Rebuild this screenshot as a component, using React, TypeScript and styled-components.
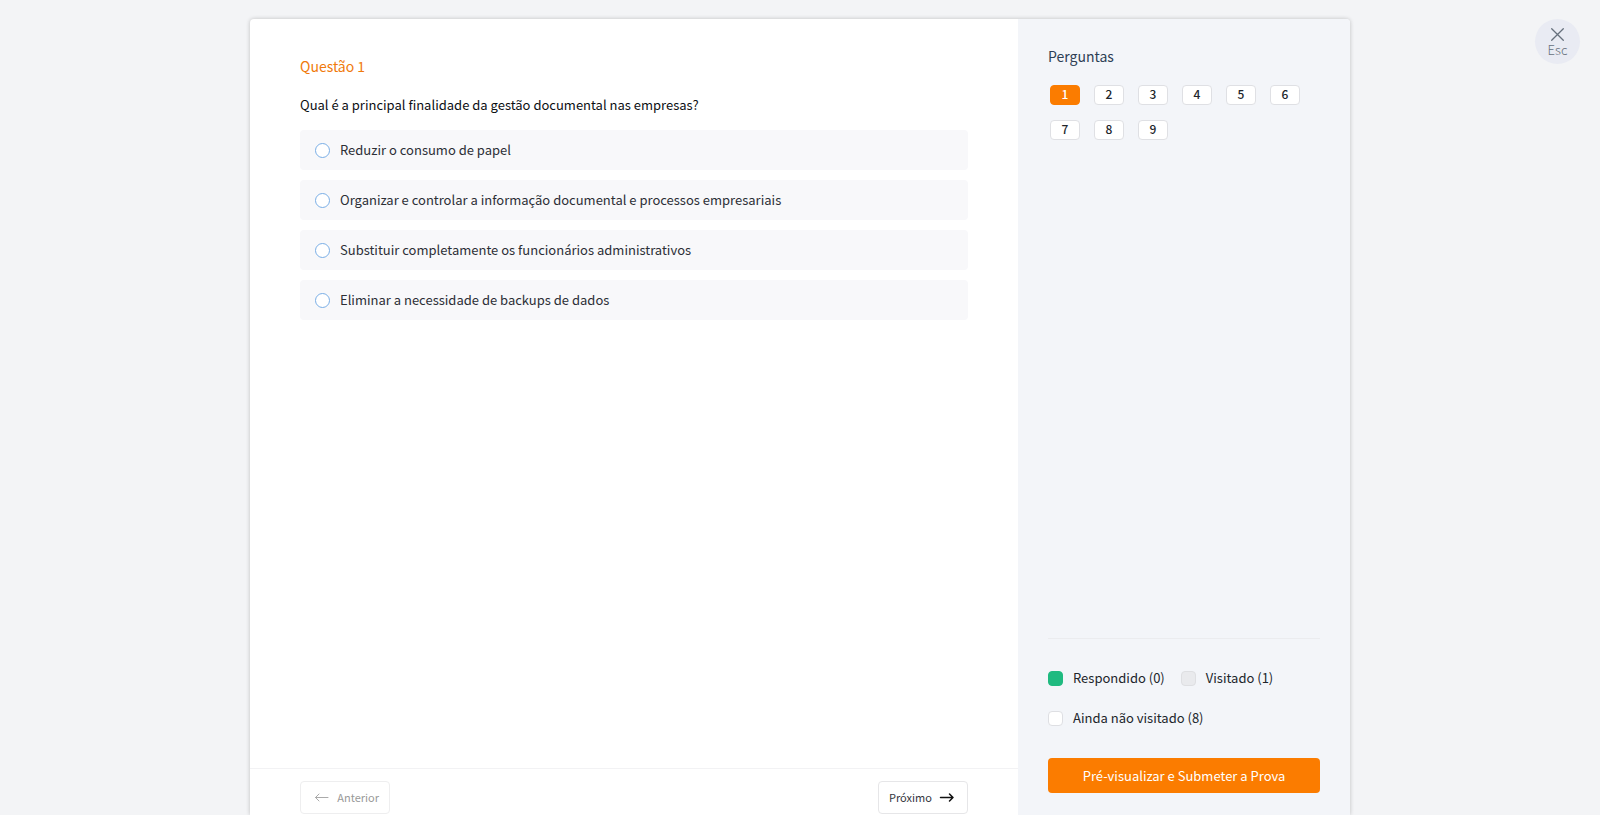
import React, { useState } from "react";
import styled, { createGlobalStyle } from "styled-components";

const GlobalStyle = createGlobalStyle`
  *, *::before, *::after { box-sizing: border-box; }
  body {
    margin: 0;
    background: #f3f4f6;
    color: #21252b;
    font-family: "Noto Sans CJK JP", "Noto Sans", sans-serif;
    font-size: 13px;
    line-height: 20px;
  }
  button, input { font: inherit; color: inherit; margin: 0; }
`;

const Page = styled.div`
  display: grid;
  grid-template-columns: minmax(60px, 1fr) minmax(0, 1100px) minmax(60px, 1fr);
  height: 100vh;
  padding-top: 19px;
  overflow: hidden;
`;

const Card = styled.main`
  grid-column: 2;
  display: flex;
  min-height: 0;
  background: #fff;
  border-radius: 4px 4px 0 0;
  box-shadow: 0 0 4px rgba(0, 0, 0, 0.22);
`;

const QuestionPane = styled.section`
  flex: 1;
  min-width: 0;
  display: flex;
  flex-direction: column;
`;

const QuestionBody = styled.form`
  flex: 1;
  min-height: 0;
  overflow: auto;
  padding: 37px 50px 20px;
`;

const QuestionNumber = styled.h1`
  margin: 0;
  font-size: 14px;
  line-height: 20px;
  font-weight: 400;
  color: #f07a0c;
`;

const Options = styled.fieldset`
  border: 0;
  margin: 0;
  padding: 0;
  min-width: 0;
  display: flex;
  flex-direction: column;
  gap: 10px;
`;

const QuestionText = styled.legend`
  padding: 19px 0 15px;
  color: #0c0f14;
`;

const Option = styled.label`
  display: flex;
  align-items: center;
  gap: 10px;
  min-height: 40px;
  padding: 0 15px;
  border-radius: 4px;
  background: #f8f8fa;
  color: #2c2f36;
  cursor: pointer;
`;

const Radio = styled.input`
  appearance: none;
  flex: none;
  width: 15px;
  height: 15px;
  border: 1px solid #79aee6;
  border-radius: 50%;
  background: #fff;
  &:checked { box-shadow: inset 0 0 0 3px #fff; background: #79aee6; }
`;

const Footer = styled.footer`
  display: flex;
  justify-content: space-between;
  padding: 12px 50px 1px;
  border-top: 1px solid #f2f2f4;
`;

const NavButton = styled.button`
  display: flex;
  align-items: center;
  justify-content: space-between;
  width: 90px;
  height: 33px;
  padding: 0 10px 1px;
  border: 1px solid #e6e6e8;
  border-radius: 4px;
  background: #fff;
  color: #33363d;
  font-size: 11px;
  line-height: 16px;
  cursor: pointer;
  &:disabled { color: #999; border-color: #eeeeef; cursor: default; }
`;

const Side = styled.aside`
  flex: none;
  width: 332px;
  display: flex;
  flex-direction: column;
  padding: 27px 30px 22px;
  border-radius: 0 4px 0 0;
  background: #f3f5f9;
`;

const SideTitle = styled.h2`
  margin: 0 0 19px;
  font-size: 14px;
  line-height: 20px;
  font-weight: 400;
  color: #2e3f55;
`;

const NumberGrid = styled.nav`
  display: grid;
  grid-template-columns: repeat(6, 30px);
  gap: 15px 14px;
  padding-left: 2px;
`;

const NumberButton = styled.button<{ $active: boolean }>`
  height: 20px;
  padding: 0 0 2px;
  border: 1px solid ${(p) => (p.$active ? "#fb7c00" : "#dfe0e4")};
  border-radius: 4px;
  background: ${(p) => (p.$active ? "#fb7c00" : "#fff")};
  color: ${(p) => (p.$active ? "#fff" : "#21252b")};
  font-size: 12px;
  line-height: 16px;
  font-weight: 500;
  cursor: pointer;
`;

const Legend = styled.ul`
  display: flex;
  flex-wrap: wrap;
  gap: 20px 16px;
  margin: auto 0 0;
  padding: 29px 0 30px;
  border-top: 1px solid #ebecef;
  list-style: none;
`;

const LegendItem = styled.li`
  display: flex;
  align-items: center;
  gap: 10px;
`;

const Swatch = styled.span<{ $fill: string; $line: string }>`
  width: 15px;
  height: 15px;
  border: 1px solid ${(p) => p.$line};
  border-radius: 4px;
  background: ${(p) => p.$fill};
`;

const SubmitButton = styled.button`
  height: 35px;
  border: 0;
  border-radius: 4px;
  background: #fb7c00;
  color: #fff;
  cursor: pointer;
`;

const CloseButton = styled.button`
  grid-column: 3;
  justify-self: end;
  display: flex;
  flex-direction: column;
  align-items: center;
  width: 45px;
  height: 45px;
  margin-right: 20px;
  padding: 8px 0 0;
  border: 0;
  border-radius: 50%;
  background: #e9ebf3;
  color: #66707c;
  font-size: 13px;
  line-height: 15px;
  font-weight: 300;
  cursor: pointer;
`;

const ArrowLeft = () => (
  <svg width="20" height="14" viewBox="0 0 20 14" fill="none" stroke="#aaa" strokeLinecap="round" strokeLinejoin="round" aria-hidden="true">
    <path d="M17 7.500H4.500M8 4L4.500 7.500L8 11" />
  </svg>
);

const ArrowRight = () => (
  <svg width="18" height="14" viewBox="0 0 18 14" fill="none" stroke="#111" strokeWidth="1.500" strokeLinecap="round" strokeLinejoin="round" aria-hidden="true">
    <path d="M1.500 7.500h12.500M10.500 4L14 7.500L10.500 11" />
  </svg>
);

const CrossIcon = () => (
  <svg width="15" height="15" viewBox="0 0 15 15" fill="none" stroke="currentColor" strokeWidth="1.300" strokeLinecap="round" aria-hidden="true">
    <path d="M1.700 1.700l11.600 11.600M13.300 1.700l-11.600 11.600" />
  </svg>
);

const answers = [
  "Reduzir o consumo de papel",
  "Organizar e controlar a informação documental e processos empresariais",
  "Substituir completamente os funcionários administrativos",
  "Eliminar a necessidade de backups de dados",
];

const statuses = [
  { text: "Respondido (0)", fill: "#1fba80", line: "#1fba80" },
  { text: "Visitado (1)", fill: "#e9eaed", line: "#dedfe2" },
  { text: "Ainda não visitado (8)", fill: "#fff", line: "#dedfe3" },
];

export default function App() {
  const [chosen, setChosen] = useState<number | null>(null);
  return (
    <Page>
      <GlobalStyle />
      <Card>
        <QuestionPane>
          <QuestionBody>
            <QuestionNumber>Questão 1</QuestionNumber>
            <Options>
              <QuestionText>Qual é a principal finalidade da gestão documental nas empresas?</QuestionText>
              {answers.map((answer, i) => (
                <Option key={answer}>
                  <Radio type="radio" name="answer" checked={chosen === i} onChange={() => setChosen(i)} />
                  {answer}
                </Option>
              ))}
            </Options>
          </QuestionBody>
          <Footer>
            <NavButton type="button" disabled>
              <ArrowLeft />
              Anterior
            </NavButton>
            <NavButton type="button">
              Próximo
              <ArrowRight />
            </NavButton>
          </Footer>
        </QuestionPane>
        <Side>
          <SideTitle>Perguntas</SideTitle>
          <NumberGrid aria-label="Perguntas">
            {[1, 2, 3, 4, 5, 6, 7, 8, 9].map((n) => (
              <NumberButton key={n} type="button" $active={n === 1}>
                {n}
              </NumberButton>
            ))}
          </NumberGrid>
          <Legend>
            {statuses.map((s) => (
              <LegendItem key={s.text}>
                <Swatch $fill={s.fill} $line={s.line} />
                {s.text}
              </LegendItem>
            ))}
          </Legend>
          <SubmitButton type="button">Pré-visualizar e Submeter a Prova</SubmitButton>
        </Side>
      </Card>
      <CloseButton type="button">
        <CrossIcon />
        Esc
      </CloseButton>
    </Page>
  );
}
